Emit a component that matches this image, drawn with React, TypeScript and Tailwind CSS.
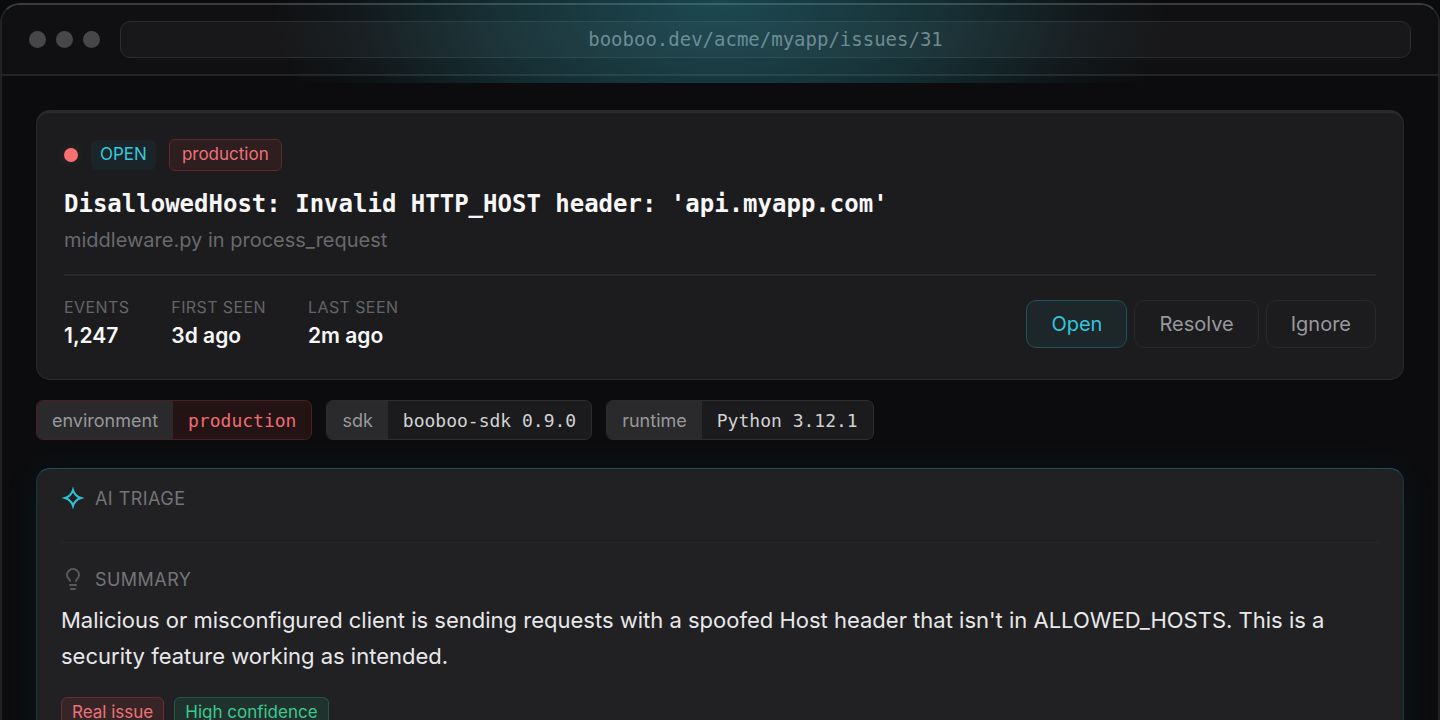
import React from 'react';
import { Lightbulb } from 'lucide-react';

const stats = [
  { label: 'Events', value: '1,247' },
  { label: 'First seen', value: '3d ago' },
  { label: 'Last seen', value: '2m ago' },
];

const actions = [
  { label: 'Open', active: true },
  { label: 'Resolve', active: false },
  { label: 'Ignore', active: false },
];

const tags = [
  { name: 'environment', value: 'production', danger: true },
  { name: 'sdk', value: 'booboo-sdk 0.9.0', danger: false },
  { name: 'runtime', value: 'Python 3.12.1', danger: false },
];

function StarIcon() {
  return (
    <svg viewBox="0 0 24 24" fill="none" stroke="#2cc3dc" strokeWidth="2" strokeMiterlimit="10" className="h-6 w-6 shrink-0">
      <path d="M12 4Q13.800 10.200 20 12Q13.800 13.800 12 20Q10.200 13.800 4 12Q10.200 10.200 12 4Z" />
    </svg>
  );
}

function BrowserBar() {
  return (
    <header className="flex items-center gap-5 border-b-2 border-[#242426] bg-[#101012] px-[27px] py-4">
      <div className="flex gap-[10px]">
        <span className="h-[17px] w-[17px] rounded-full bg-[#47474a]" />
        <span className="h-[17px] w-[17px] rounded-full bg-[#47474a]" />
        <span className="h-[17px] w-[17px] rounded-full bg-[#47474a]" />
      </div>
      <input
        type="text"
        readOnly
        aria-label="Address"
        value="booboo.dev/acme/myapp/issues/31"
        className="h-[37px] min-w-0 flex-1 rounded-[10px] border border-[#2c2c2e] bg-[#18181a] pb-[2px] text-center font-['DejaVu_Sans_Mono',monospace] text-[19px] text-[#858587] outline-none"
      />
    </header>
  );
}

function IssueCard() {
  return (
    <section className="rounded-[14px] border border-t-[3px] border-[#29292b] bg-[#1c1c1e] px-[27px] pt-[26px] pb-7">
      <div className="flex h-8 items-center">
        <span className="h-[14px] w-[14px] rounded-full bg-[#f87171] shadow-[0_0_10px_rgba(248,113,113,0.12)]" />
        <span className="ml-[13px] flex h-[30px] items-center rounded-md bg-[#1b2529] px-[9px] text-[17px] text-[#38c6dc]">OPEN</span>
        <span className="ml-[13px] flex h-8 items-center rounded-md border border-[#5e2a2d] bg-[#2e1e20] px-3 text-[17px] text-[#ec7377]">
          production
        </span>
      </div>
      <h1 className="mt-[17px] font-['DejaVu_Sans_Mono',monospace] text-2xl leading-8 font-bold text-[#f7f7f8]">
        DisallowedHost: Invalid HTTP_HOST header: 'api.myapp.com'
      </h1>
      <p className="mt-1 text-[20px] leading-8 text-[#69696c]">middleware.py in process_request</p>

      <div className="mt-[18px] flex items-center justify-between border-t-2 border-[#29292b] pt-[21px]">
        <dl className="flex gap-[42px]">
          {stats.map((stat) => (
            <div key={stat.label}>
              <dt className="text-[16px] leading-5 tracking-wide text-[#646468] uppercase">{stat.label}</dt>
              <dd className="mt-1 text-[21px] leading-[30px] font-semibold text-[#f7f7f8]">{stat.value}</dd>
            </div>
          ))}
        </dl>
        <div className="flex gap-[7px]">
          {actions.map((action) => (
            <button
              key={action.label}
              type="button"
              className={`h-12 rounded-[10px] border px-6 text-[20px] ${
                action.active ? 'border-[#1d535b] bg-[#1d272a] text-[#35c5dc]' : 'border-[#29292b] text-[#98989c]'
              }`}
            >
              {action.label}
            </button>
          ))}
        </div>
      </div>
    </section>
  );
}

function Tags() {
  return (
    <div className="mt-5 flex gap-[14px]">
      {tags.map((tag) => (
        <div
          key={tag.name}
          className={`flex h-10 items-stretch overflow-hidden rounded-[7px] border ${
            tag.danger ? 'border-[#4b1e22] bg-[#231315]' : 'border-[#2c2c2e] bg-[#1b1b1d]'
          }`}
        >
          <span className="flex items-center bg-[#2a2a2c] px-[15px] text-[18px] text-[#98989c]">{tag.name}</span>
          <span
            className={`flex items-center px-[15px] font-['DejaVu_Sans_Mono',monospace] text-[18px] whitespace-nowrap ${
              tag.danger ? 'text-[#ee6d70]' : 'text-[#d2d2d5]'
            }`}
          >
            {tag.value}
          </span>
        </div>
      ))}
    </div>
  );
}

function TriageCard() {
  return (
    <section className="mt-7 rounded-[14px] border border-[#17363d] border-t-[#1c505c] bg-[#212124] px-6 pt-[17px] pb-8 shadow-[0_0_40px_rgba(34,211,238,0.05)]">
      <h2 className="flex h-6 items-center gap-[10px] text-[18px] tracking-wide text-[#747478]">
        <StarIcon />
        AI TRIAGE
      </h2>
      <div className="mt-8 border-t border-[#27272a] pt-6">
        <h3 className="flex h-6 items-center gap-[10px] text-[18px] tracking-wide text-[#747478]">
          <Lightbulb className="h-6 w-6 shrink-0 text-[#58585c]" strokeWidth={2} />
          SUMMARY
        </h3>
        <p className="mt-[11px] text-[22px] leading-9 text-[#e8e8ea]">
          Malicious or misconfigured client is sending requests with a spoofed Host header that isn't in ALLOWED_HOSTS. This is a
          security feature working as intended.
        </p>
        <div className="mt-[23px] flex gap-[10px]">
          <span className="flex h-8 items-center rounded-md border border-[#6b2c31] bg-[#372427] px-[10px] text-[17px] text-[#ec7377]">
            Real issue
          </span>
          <span className="flex h-8 items-center rounded-md border border-[#1f5a46] bg-[#20322e] px-[10px] text-[17px] text-[#3ec98f]">
            High confidence
          </span>
        </div>
      </div>
    </section>
  );
}

export default function App() {
  return (
    <div className="relative h-screen overflow-hidden bg-[#0a0b0c] pt-[3px] font-[Inter,sans-serif]">
      <div className="min-h-screen overflow-hidden rounded-t-[20px] border-2 border-b-0 border-[#222224] border-t-[#3c3c3e] bg-[#0c0c0e]">
        <BrowserBar />
        <main className="px-[34px] pt-[34px]">
          <IssueCard />
          <Tags />
          <TriageCard />
        </main>
      </div>
      {/* Glow over the top of the window */}
      <div className="pointer-events-none absolute inset-x-0 top-0 h-[83px] bg-[radial-gradient(ellipse_450px_260px_at_50%_0,rgba(50,165,185,0.38),rgba(44,150,165,0.24)_50%,rgba(44,150,165,0.06)_82%,transparent)]" />
    </div>
  );
}
